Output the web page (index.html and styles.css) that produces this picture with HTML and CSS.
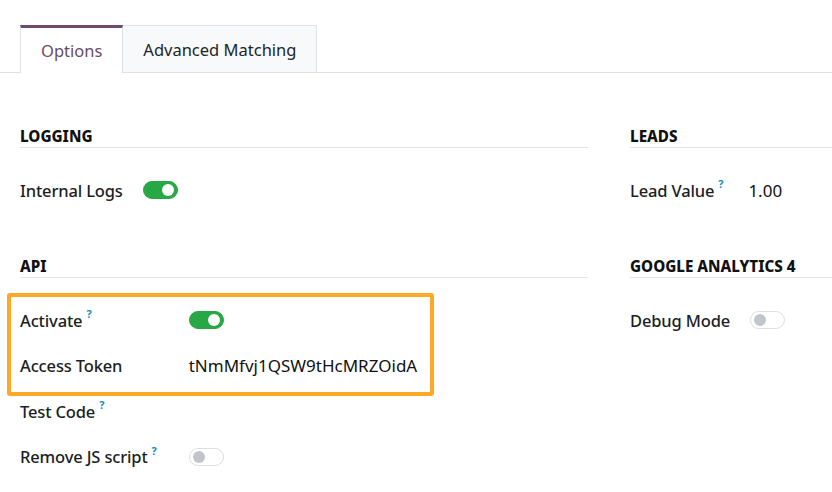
FILE: index.html
```html
<!DOCTYPE html>
<html lang="en">
<head>
<meta charset="utf-8">
<title>Settings</title>
<link rel="stylesheet" href="styles.css">
</head>
<body>
<div class="tabs">
  <div class="tab active">Options</div>
  <div class="tab">Advanced Matching</div>
</div>
<div class="content">
  <div class="col">
    <section class="group">
      <h3 class="group-title">Logging</h3>
      <div class="grid">
        <div class="label">Internal Logs</div>
        <div class="field"><span class="toggle on"></span></div>
      </div>
    </section>
    <section class="group">
      <h3 class="group-title">API</h3>
      <div class="grid api">
        <div class="label">Activate<sup class="help">?</sup></div>
        <div class="field"><span class="toggle on"></span></div>
        <div class="label">Access Token</div>
        <div class="field value">tNmMfvj1QSW9tHcMRZOidA</div>
        <div class="label">Test Code<sup class="help">?</sup></div>
        <div class="field"></div>
        <div class="label">Remove JS script<sup class="help">?</sup></div>
        <div class="field"><span class="toggle"></span></div>
        <div class="highlight"></div>
      </div>
    </section>
  </div>
  <div class="col">
    <section class="group">
      <h3 class="group-title">Leads</h3>
      <div class="grid">
        <div class="label">Lead Value<sup class="help">?</sup></div>
        <div class="field value num">1.00</div>
      </div>
    </section>
    <section class="group">
      <h3 class="group-title">Google Analytics 4</h3>
      <div class="grid">
        <div class="label">Debug Mode</div>
        <div class="field"><span class="toggle"></span></div>
      </div>
    </section>
  </div>
</div>
</body>
</html>
```
FILE: styles.css
```css
html, body {
  margin: 0;
  padding: 0;
  background: #ffffff;
  overflow: hidden;
}
body {
  width: 832px;
  height: 492px;
  font-family: "Noto Sans", "Open Sans", sans-serif;
  color: #1f2328;
  font-size: 16.5px;
}
.tabs {
  display: flex;
  margin-top: 25px;
  padding-left: 20px;
  border-bottom: 1px solid #dee2e6;
  height: 47px;
}
.tab {
  box-sizing: border-box;
  height: 47px;
  padding: 0 20px;
  display: flex;
  align-items: center;
  font-size: 16.5px;
  color: #212529;
  background: #f8f9fa;
  border: 1px solid #dee2e6;
  border-left: none;
  border-bottom: none;
}
.tab.active {
  background: #ffffff;
  color: #6b4c63;
  border-left: 1px solid #dee2e6;
  border-top: 3px solid #714b67;
  height: 48px;
  margin-bottom: -1px;
  padding-top: 0;
}
.content {
  display: grid;
  grid-template-columns: 568px 568px;
  column-gap: 42px;
  padding: 53px 0 0 20px;
}
.group {
  margin-bottom: 53px;
}
.group-title {
  margin: 0;
  font-size: 15.2px;
  font-weight: 800;
  line-height: 21px;
  text-transform: uppercase;
  color: #111111;
  border-bottom: 1px solid #e2e4e7;
}
.grid {
  position: relative;
  display: grid;
  grid-template-columns: max-content 1fr;
  column-gap: 20px;
  row-gap: 19.5px;
  margin-top: 29px;
}
.label {
  height: 26px;
  display: flex;
  align-items: center;
  font-weight: 500;
  color: #1b1e22;
  letter-spacing: -0.15px;
}
.help {
  font-size: 11px;
  font-weight: 700;
  color: #1a8db5;
  margin-left: 4px;
  margin-right: 12px;
  align-self: flex-start;
  line-height: 14px;
}
.field {
  height: 26px;
  display: flex;
  align-items: center;
  font-size: 17px;
}
.value {
  color: #111;
}
.num {
  margin-left: -7px;
}
.toggle {
  position: relative;
  box-sizing: border-box;
  width: 35px;
  height: 18px;
  border-radius: 9px;
  border: 1px solid #dcdfe3;
  background: #ffffff;
}
.toggle::after {
  content: "";
  position: absolute;
  top: 2px;
  left: 3px;
  width: 12px;
  height: 12px;
  border-radius: 50%;
  background: #c2c5c9;
}
.toggle.on {
  background: #28a745;
  border-color: #28a745;
}
.toggle.on::after {
  left: auto;
  right: 3px;
  background: #ffffff;
}
.highlight {
  position: absolute;
  left: -13px;
  top: -14px;
  width: 427px;
  height: 103px;
  box-sizing: border-box;
  border: 4px solid #ffa726;
  border-radius: 3px;
  pointer-events: none;
}
```
